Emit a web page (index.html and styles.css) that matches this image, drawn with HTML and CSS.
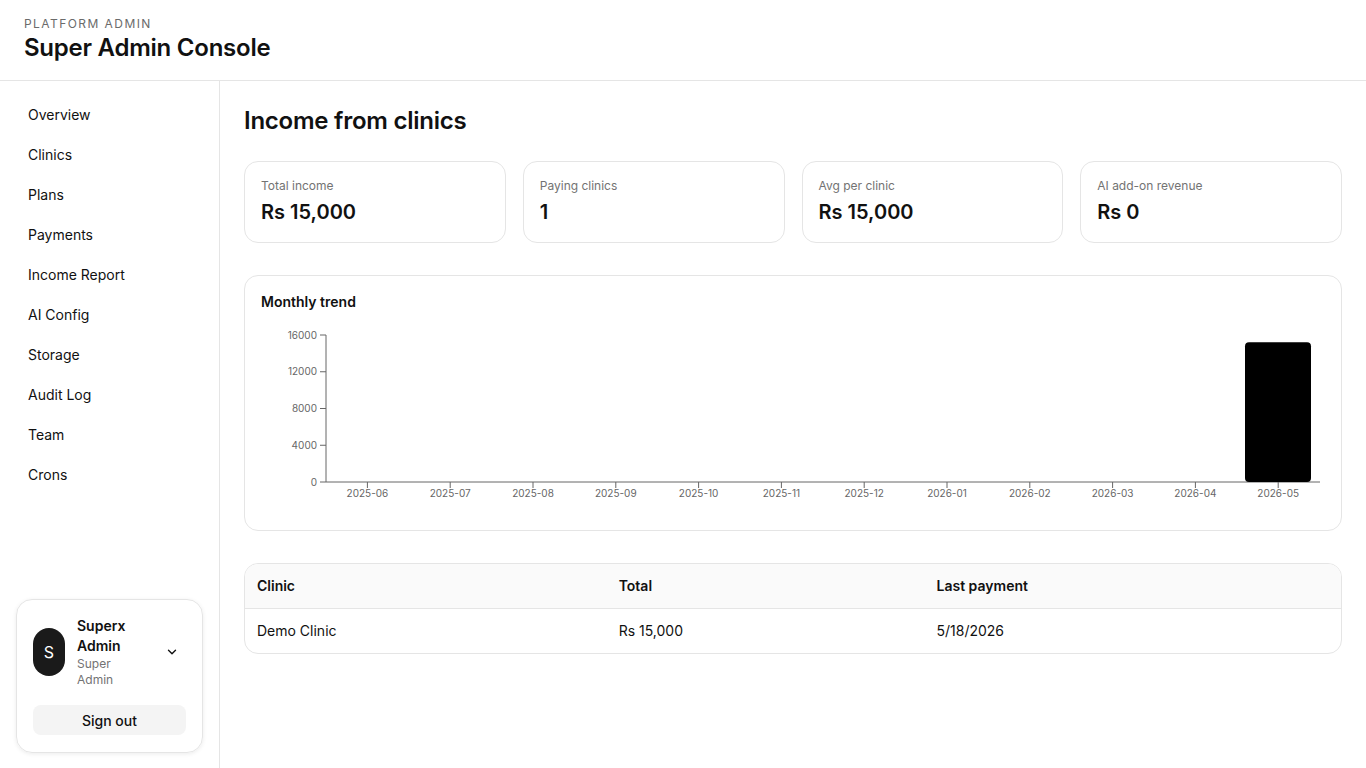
FILE: index.html
```html
<!DOCTYPE html>
<html lang="en">
<head>
  <meta charset="UTF-8" />
  <meta name="viewport" content="width=device-width, initial-scale=1.0"/>
  <title>Super Admin Console</title>
  <link rel="stylesheet" href="styles.css">
</head>
<body>

<header class="topbar">
  <div class="eyebrow">PLATFORM ADMIN</div>
  <h1>Super Admin Console</h1>
</header>

<div class="layout">
  <aside class="sidebar">
    <nav class="nav">
      <a href="#">Overview</a>
      <a href="#">Clinics</a>
      <a href="#">Plans</a>
      <a href="#">Payments</a>
      <a href="#">Income Report</a>
      <a href="#">AI Config</a>
      <a href="#">Storage</a>
      <a href="#">Audit Log</a>
      <a href="#">Team</a>
      <a href="#">Crons</a>
    </nav>

    <div class="user-card">
      <div class="user-row">
        <div class="avatar">S</div>
        <div class="user-info">
          <div class="user-name">Superx Admin</div>
          <div class="user-role">Super Admin</div>
        </div>
        <button class="chevron" type="button">
          <svg width="14" height="14" viewBox="0 0 24 24" fill="none" stroke="#111" stroke-width="2.4" stroke-linecap="round" stroke-linejoin="round"><path d="M6 9l6 6 6-6"/></svg>
        </button>
      </div>
      <button class="signout" type="button">Sign out</button>
    </div>
  </aside>

  <main class="content">
    <h2>Income from clinics</h2>

    <div class="stats">
      <div class="stat">
        <div class="stat-label">Total income</div>
        <div class="stat-value">Rs 15,000</div>
      </div>
      <div class="stat">
        <div class="stat-label">Paying clinics</div>
        <div class="stat-value">1</div>
      </div>
      <div class="stat">
        <div class="stat-label">Avg per clinic</div>
        <div class="stat-value">Rs 15,000</div>
      </div>
      <div class="stat">
        <div class="stat-label">AI add-on revenue</div>
        <div class="stat-value">Rs 0</div>
      </div>
    </div>

    <section class="panel">
      <h3>Monthly trend</h3>
      <svg class="chart" width="1064" height="189" viewBox="0 0 1064 189">
        <g class="axis">
          <line x1="65" y1="10" x2="65" y2="157"/>
          <line x1="65" y1="157" x2="1059" y2="157"/>
          <!-- y ticks -->
          <line x1="59" y1="10" x2="65" y2="10"/>
          <line x1="59" y1="46.75" x2="65" y2="46.75"/>
          <line x1="59" y1="83.5" x2="65" y2="83.5"/>
          <line x1="59" y1="120.25" x2="65" y2="120.25"/>
          <line x1="59" y1="157" x2="65" y2="157"/>
          <!-- x ticks -->
          <line x1="106.4" y1="157" x2="106.4" y2="163"/>
          <line x1="189.2" y1="157" x2="189.2" y2="163"/>
          <line x1="272" y1="157" x2="272" y2="163"/>
          <line x1="354.8" y1="157" x2="354.8" y2="163"/>
          <line x1="437.6" y1="157" x2="437.6" y2="163"/>
          <line x1="520.4" y1="157" x2="520.4" y2="163"/>
          <line x1="603.2" y1="157" x2="603.2" y2="163"/>
          <line x1="686" y1="157" x2="686" y2="163"/>
          <line x1="768.8" y1="157" x2="768.8" y2="163"/>
          <line x1="851.6" y1="157" x2="851.6" y2="163"/>
          <line x1="934.4" y1="157" x2="934.4" y2="163"/>
          <line x1="1017.2" y1="157" x2="1017.2" y2="163"/>
        </g>
        <g class="ylabels">
          <text x="56" y="13.5">16000</text>
          <text x="56" y="50">12000</text>
          <text x="56" y="87">8000</text>
          <text x="56" y="124">4000</text>
          <text x="56" y="160.5">0</text>
        </g>
        <g class="xlabels">
          <text x="106.4" y="172">2025-06</text>
          <text x="189.2" y="172">2025-07</text>
          <text x="272" y="172">2025-08</text>
          <text x="354.8" y="172">2025-09</text>
          <text x="437.6" y="172">2025-10</text>
          <text x="520.4" y="172">2025-11</text>
          <text x="603.2" y="172">2025-12</text>
          <text x="686" y="172">2026-01</text>
          <text x="768.8" y="172">2026-02</text>
          <text x="851.6" y="172">2026-03</text>
          <text x="934.4" y="172">2026-04</text>
          <text x="1017.2" y="172">2026-05</text>
        </g>
        <path class="bar" d="M984 21.2 a4 4 0 0 1 4 -4 h58 a4 4 0 0 1 4 4 V153 a4 4 0 0 1 -4 4 h-58 a4 4 0 0 1 -4 -4 Z"/>
      </svg>
    </section>

    <div class="table-wrap">
      <table>
        <thead>
          <tr>
            <th class="col-clinic">Clinic</th>
            <th class="col-total">Total</th>
            <th>Last payment</th>
          </tr>
        </thead>
        <tbody>
          <tr>
            <td>Demo Clinic</td>
            <td>Rs 15,000</td>
            <td>5/18/2026</td>
          </tr>
        </tbody>
      </table>
    </div>
  </main>
</div>

</body>
</html>
```

FILE: styles.css
```css
* {
  box-sizing: border-box;
}

body {
  margin: 0;
  font-family: 'Inter', 'Noto Sans', sans-serif;
  color: #111;
  background: #fff;
  height: 100vh;
  display: flex;
  flex-direction: column;
  overflow: hidden;
}

.topbar {
  padding: 16px 24px;
  border-bottom: 1px solid #e5e5e5;
}

.eyebrow {
  font-size: 12px;
  line-height: 16px;
  letter-spacing: 0.12em;
  color: #6b6b6b;
}

.topbar h1 {
  margin: 0;
  font-size: 24px;
  line-height: 32px;
  font-weight: 600;
  letter-spacing: -0.01em;
}

.layout {
  flex: 1;
  display: flex;
  min-height: 0;
}

.sidebar {
  width: 220px;
  flex-shrink: 0;
  border-right: 1px solid #e5e5e5;
  padding: 16px 16px 15px;
  display: flex;
  flex-direction: column;
  justify-content: space-between;
}

.nav {
  display: flex;
  flex-direction: column;
  gap: 4px;
}

.nav a {
  display: block;
  padding: 8px 12px;
  font-size: 14px;
  line-height: 20px;
  color: #111;
  text-decoration: none;
  border-radius: 8px;
}

.user-card {
  border: 1px solid #e5e5e5;
  border-radius: 16px;
  padding: 16px 16px 17px;
  box-shadow: 0 1px 4px rgba(0,0,0,0.08);
}

.user-row {
  display: flex;
  align-items: center;
  gap: 12px;
}

.avatar {
  width: 32px;
  height: 48px;
  flex-shrink: 0;
  border-radius: 9999px;
  background: #1a1a1a;
  color: #fff;
  display: flex;
  align-items: center;
  justify-content: center;
  font-size: 16px;
}

.user-info {
  width: 66px;
}

.user-name {
  font-size: 14px;
  line-height: 20px;
  font-weight: 600;
}

.user-role {
  font-size: 12px;
  line-height: 16px;
  color: #737373;
  width: 48px;
}

.chevron {
  margin-left: auto;
  margin-right: 0;
  width: 28px;
  height: 28px;
  border: none;
  background: none;
  padding: 0;
  display: flex;
  align-items: center;
  justify-content: center;
}

.signout {
  display: block;
  width: 100%;
  margin-top: 17px;
  height: 30px;
  border: none;
  border-radius: 8px;
  background: #f4f4f4;
  font-family: inherit;
  font-size: 14px;
  font-weight: 500;
  color: #111;
}

.content {
  flex: 1;
  padding: 24px;
  min-width: 0;
}

.content h2 {
  margin: 0 0 24px;
  font-size: 24px;
  line-height: 32px;
  font-weight: 600;
  letter-spacing: -0.01em;
}

.stats {
  display: grid;
  grid-template-columns: repeat(4, 1fr);
  gap: 17px;
  margin-bottom: 32px;
}

.stat {
  border: 1px solid #e5e5e5;
  border-radius: 14px;
  padding: 16px;
}

.stat-label {
  font-size: 12px;
  line-height: 16px;
  color: #737373;
}

.stat-value {
  margin-top: 4px;
  font-size: 20px;
  line-height: 28px;
  font-weight: 600;
}

.panel {
  border: 1px solid #e5e5e5;
  border-radius: 14px;
  padding: 16px;
  margin-bottom: 32px;
}

.panel h3 {
  margin: 0 0 13px;
  font-size: 14px;
  line-height: 20px;
  font-weight: 600;
}

.chart {
  display: block;
}

.chart .axis line {
  stroke: #666;
  stroke-width: 1;
}

.chart text {
  font-family: 'Inter', sans-serif;
  font-size: 10px;
  fill: #666;
}

.chart .ylabels text {
  text-anchor: end;
}

.chart .xlabels text {
  text-anchor: middle;
}

.chart .bar {
  fill: #000;
}

.table-wrap {
  border: 1px solid #e5e5e5;
  border-radius: 14px;
  overflow: hidden;
}

table {
  width: 100%;
  border-collapse: collapse;
  font-size: 14px;
}

th, td {
  text-align: left;
  padding: 12px;
  line-height: 20px;
}

th {
  background: #fafafa;
  font-weight: 600;
  border-bottom: 1px solid #e5e5e5;
}

.col-clinic {
  width: 33%;
}

.col-total {
  width: 29%;
}
```
